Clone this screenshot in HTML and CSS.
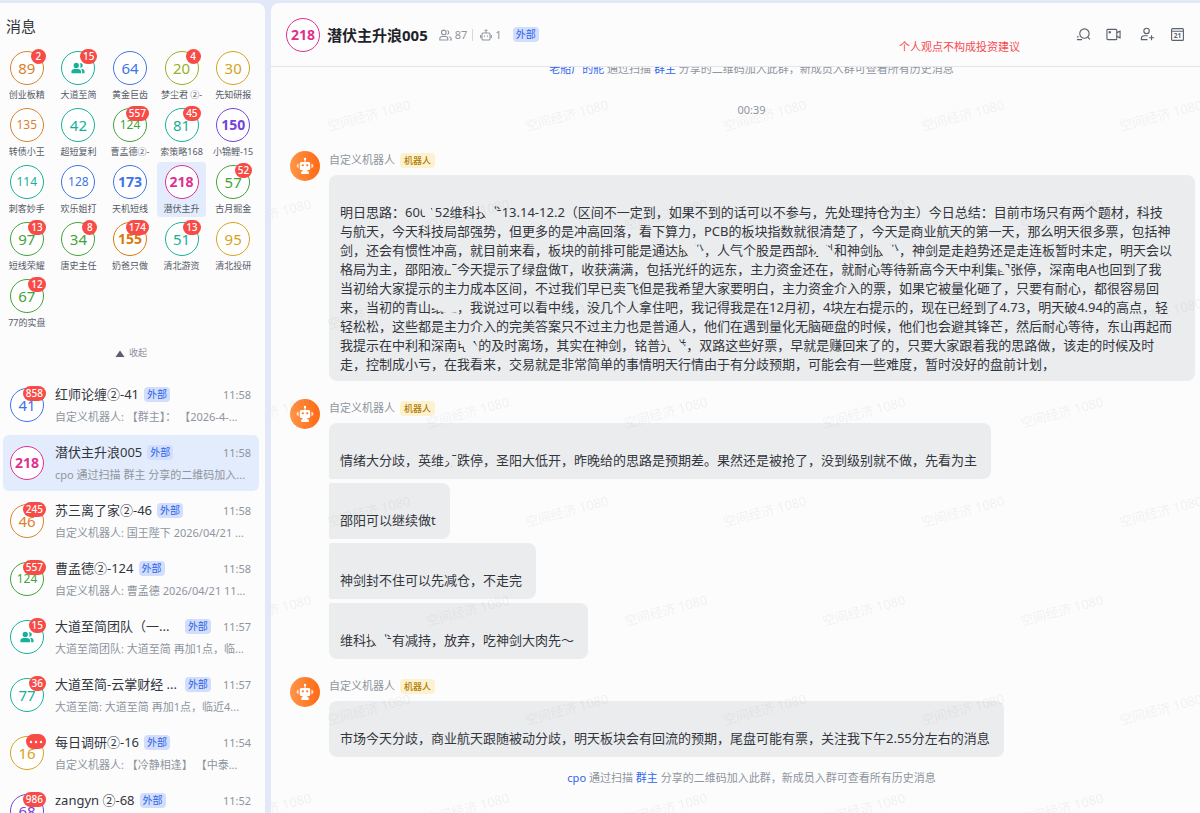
FILE: index.html
```html
<!DOCTYPE html>
<html lang="zh-CN">
<head>
<meta charset="utf-8">
<title>消息</title>
<link rel="stylesheet" href="styles.css">
</head>
<body>
<svg width="0" height="0" class="defs" aria-hidden="true">
  <symbol id="people" viewBox="0 0 16 16">
    <g fill="currentColor"><circle cx="6" cy="5" r="3"/><path d="M0.500 14v-2c0-2 1.500-3 3.500-3h4c2 0 3.500 1 3.500 3v2z"/><path d="M10 2.600a2.600 2.600 0 1 1 0.400 5c.8-1.600.8-3.400-.4-5z"/><path d="M11.500 9h1c2 0 3 1.200 3 3v2h-2.800v-2c0-1.200-.4-2.200-1.200-3z"/></g>
  </symbol>
  <symbol id="bot" viewBox="0 0 30 30">
    <g fill="#fff"><circle cx="15" cy="8" r="1.200"/><rect x="14.500" y="8" width="1" height="4"/><rect x="9.800" y="11" width="10.400" height="8" rx="1.500"/><path d="M12.500 19h5v1.500h1.300V23h-7.600v-2.500h1.300z"/><path d="M8.600 12.800v4.400c-1.200-.3-2-1.200-2-2.200s.8-1.900 2-2.200zM21.400 12.800v4.400c1.200-.3 2-1.200 2-2.200s-.8-1.900-2-2.200z" opacity=".8"/></g>
    <g fill="#ff7a22"><circle cx="12.800" cy="14.300" r="1.100"/><circle cx="17.200" cy="14.300" r="1.100"/></g>
  </symbol>
</svg>

<aside class="sidebar">
  <h1 class="sidebar-title">消息</h1>
  <div class="pins">
    <button class="pin"><span class="avatar orange">89<span class="badge">2</span></span><span class="pin-label">创业板精</span></button>
    <button class="pin"><span class="avatar teal"><svg class="people"><use href="#people"/></svg><span class="badge">15</span></span><span class="pin-label">大道至简</span></button>
    <button class="pin"><span class="avatar blue">64</span><span class="pin-label">黄金巨齿</span></button>
    <button class="pin"><span class="avatar lime">20<span class="badge">4</span></span><span class="pin-label">梦尘君 ②-</span></button>
    <button class="pin"><span class="avatar gold">30</span><span class="pin-label">先知研报</span></button>

    <button class="pin"><span class="avatar orange three">135</span><span class="pin-label">转债小王</span></button>
    <button class="pin"><span class="avatar teal">42</span><span class="pin-label">超短复利</span></button>
    <button class="pin"><span class="avatar green three">124<span class="badge">557</span></span><span class="pin-label">曹孟德②-</span></button>
    <button class="pin"><span class="avatar teal">81<span class="badge">45</span></span><span class="pin-label">索策略168</span></button>
    <button class="pin"><span class="avatar purple strong">150</span><span class="pin-label">小锦鲤-15</span></button>

    <button class="pin"><span class="avatar teal three">114</span><span class="pin-label">刺客妙手</span></button>
    <button class="pin"><span class="avatar blue three">128</span><span class="pin-label">欢乐姐打</span></button>
    <button class="pin"><span class="avatar blue strong">173</span><span class="pin-label">天机短线</span></button>
    <button class="pin selected"><span class="avatar pink strong">218</span><span class="pin-label">潜伏主升</span></button>
    <button class="pin"><span class="avatar green">57<span class="badge">52</span></span><span class="pin-label">古月掘金</span></button>

    <button class="pin"><span class="avatar green">97<span class="badge">13</span></span><span class="pin-label">短线荣耀</span></button>
    <button class="pin"><span class="avatar green">34<span class="badge">8</span></span><span class="pin-label">唐史主任</span></button>
    <button class="pin"><span class="avatar orange strong">155<span class="badge">174</span></span><span class="pin-label">奶爸只做</span></button>
    <button class="pin"><span class="avatar teal">51<span class="badge">13</span></span><span class="pin-label">清北游资</span></button>
    <button class="pin"><span class="avatar gold">95</span><span class="pin-label">清北投研</span></button>

    <button class="pin"><span class="avatar green">67<span class="badge">12</span></span><span class="pin-label">77的实盘</span></button>
  </div>
  <button class="collapse"><svg width="10" height="7" viewBox="0 0 10 7"><path d="M5 0.500 9.500 7h-9z" fill="#5a606b"/></svg>收起</button>

  <div class="chats">
    <button class="chat"><span class="avatar blue">41<span class="badge">858</span></span>
      <span class="chat-body"><span class="chat-top"><span class="chat-name">红师论缠②-41</span><span class="tag">外部</span><time>11:58</time></span><span class="preview">自定义机器人: 【群主】： 【2026-4-...</span></span></button>
    <button class="chat selected"><span class="avatar pink strong">218</span>
      <span class="chat-body"><span class="chat-top"><span class="chat-name">潜伏主升浪005</span><span class="tag">外部</span><time>11:58</time></span><span class="preview">cpo 通过扫描 群主 分享的二维码加入...</span></span></button>
    <button class="chat"><span class="avatar orange">46<span class="badge">245</span></span>
      <span class="chat-body"><span class="chat-top"><span class="chat-name">苏三离了家②-46</span><span class="tag">外部</span><time>11:58</time></span><span class="preview">自定义机器人: 国王陛下 2026/04/21 ...</span></span></button>
    <button class="chat"><span class="avatar green three">124<span class="badge">557</span></span>
      <span class="chat-body"><span class="chat-top"><span class="chat-name">曹孟德②-124</span><span class="tag">外部</span><time>11:58</time></span><span class="preview">自定义机器人: 曹孟德 2026/04/21 11...</span></span></button>
    <button class="chat"><span class="avatar teal"><svg class="people"><use href="#people"/></svg><span class="badge">15</span></span>
      <span class="chat-body"><span class="chat-top"><span class="chat-name fill">大道至简团队（一...</span><span class="tag">外部</span><time>11:57</time></span><span class="preview">大道至简团队: 大道至简 再加1点，临...</span></span></button>
    <button class="chat"><span class="avatar teal">77<span class="badge">36</span></span>
      <span class="chat-body"><span class="chat-top"><span class="chat-name fill">大道至简-云掌财经 ...</span><span class="tag">外部</span><time>11:57</time></span><span class="preview">大道至简: 大道至简 再加1点，临近4...</span></span></button>
    <button class="chat"><span class="avatar gold">16<span class="badge"><svg width="14" height="4" viewBox="0 0 14 4" fill="#fff"><circle cx="2" cy="2" r="1.200"/><circle cx="7" cy="2" r="1.200"/><circle cx="12" cy="2" r="1.200"/></svg></span></span>
      <span class="chat-body"><span class="chat-top"><span class="chat-name">每日调研②-16</span><span class="tag">外部</span><time>11:54</time></span><span class="preview">自定义机器人: 【冷静相逢】 【中泰...</span></span></button>
    <button class="chat"><span class="avatar purple">68<span class="badge">986</span></span>
      <span class="chat-body"><span class="chat-top"><span class="chat-name">zangyn ②-68</span><span class="tag">外部</span><time>11:52</time></span></span></button>
  </div>
</aside>

<main class="panel">
  <header class="head">
    <span class="avatar pink strong">218</span>
    <h2 class="head-title">潜伏主升浪005</h2>
    <span class="stat"><svg width="13" height="12" viewBox="0 0 13 12" fill="none" stroke="currentColor" stroke-width="1.100"><circle cx="4.800" cy="3.400" r="2.300"/><path d="M.8 11V9.800c0-1.500 1-2.300 2.300-2.300h3.400c1.300 0 2.300.8 2.300 2.300V11zM8.300 1.500a2.100 2.100 0 0 1 0 4M10 7.800c1.400.2 2.200 1 2.200 2.200v1h-1.400"/></svg>87</span>
    <span class="rule"></span>
    <span class="stat"><svg width="12" height="12" viewBox="0 0 12 12" fill="none" stroke="currentColor" stroke-width="1.100"><rect x="2" y="4" width="8" height="7" rx="1"/><path d="M6 4V1M4.500 1.200h3M.6 6v3M11.400 6v3M4.500 6.500v1.200M7.500 6.500v1.200"/></svg>1</span>
    <span class="tag">外部</span>
    <p class="notice-red">个人观点不构成投资建议</p>
    <nav class="tools">
      <button aria-label="搜索"><svg viewBox="0 0 16 16"><circle cx="9" cy="7" r="5"/><path d="m12.500 10.700 2.500 2.600M1 10.500h1.800M1 13.500h5.500"/></svg></button>
      <button aria-label="视频会议"><svg viewBox="0 0 16 16"><rect x="1" y="2.500" width="10.500" height="11" rx="1"/><path d="m11.500 6 3.500-1.500v7L11.500 10"/><circle cx="4" cy="5.600" r=".7" fill="currentColor"/></svg></button>
      <button aria-label="添加成员" class="add"><svg viewBox="0 0 16 16"><circle cx="7" cy="4.200" r="2.900"/><path d="M8 13.500H1.500V12c0-1.700 1.200-2.700 2.800-2.700h4M12.300 8.800v5.400M9.600 11.500H15"/></svg></button>
      <button aria-label="日历"><svg viewBox="0 0 16 16"><rect x="1.700" y="1.700" width="12.600" height="12.600" rx="1"/><path d="M1.700 4.500h12.600"/><text x="8" y="12" text-anchor="middle">21</text></svg></button>
    </nav>
  </header>

  <section class="stream">
    <p class="system first"><a href="#">老船厂的舵</a> 通过扫描 <a href="#">群主</a> 分享的二维码加入此群，新成员入群可查看所有历史消息</p>
    <p class="system stamp">00:39</p>

    <article class="group">
      <svg class="bot"><use href="#bot"/></svg>
      <div class="group-body">
        <p class="sender">自定义机器人<span class="tag bot-tag">机器人</span></p>
        <div class="bubble long">明日思路：60<span class="worn">01</span>52维科<span class="worn">技术</span>13.14-12.2（区间不一定到，如果不到的话可以不参与，先处理持仓为主）今日总结：目前市场只有两个题材，科技<br>与航天，今天科技局部强势，但更多的是冲高回落，看下算力，PCB的板块指数就很清楚了，今天是商业航天的第一天，那么明天很多票，包括神<br>剑，还会有惯性冲高，就目前来看，板块的前排可能是通达<span class="worn">股份</span>，人气个股是西部<span class="worn">材料</span>和神剑<span class="worn">股份</span>，神剑是走趋势还是走连板暂时未定，明天会以<br>格局为主，邵阳液<span class="worn one">压</span>今天提示了绿盘做T，收获满满，包括光纤的远东，主力资金还在，就耐心等待新高今天中利集<span class="worn one">团</span>张停，深南电A也回到了我<br>当初给大家提示的主力成本区间，不过我们早已卖飞但是我希望大家要明白，主力资金介入的票，如果它被量化砸了，只要有耐心，都很容易回<br>来，当初的青山<span class="worn low">纸业</span>，我说过可以看中线，没几个人拿住吧，我记得我是在12月初，4块左右提示的，现在已经到了4.73，明天破4.94的高点，轻<br>轻松松，这些都是主力介入的完美答案只不过主力也是普通人，他们在遇到量化无脑砸盘的时候，他们也会避其锋芒，然后耐心等待，东山再起而<br>我提示在中利和深南<span class="worn">电A</span>的及时离场，其实在神剑，铭普<span class="worn">光磁</span>，双路这些好票，早就是赚回来了的，只要大家跟着我的思路做，该走的时候及时<br>走，控制成小亏，在我看来，交易就是非常简单的事情明天行情由于有分歧预期，可能会有一些难度，暂时没好的盘前计划，</div>
      </div>
    </article>

    <article class="group">
      <svg class="bot"><use href="#bot"/></svg>
      <div class="group-body">
        <p class="sender">自定义机器人<span class="tag bot-tag">机器人</span></p>
        <div class="bubble">情绪大分歧，英维<span class="worn one">克</span>跌停，圣阳大低开，昨晚给的思路是预期差。果然还是被抢了，没到级别就不做，先看为主</div>
        <div class="bubble">邵阳可以继续做t</div>
        <div class="bubble">神剑封不住可以先减仓，不走完</div>
        <div class="bubble">维科<span class="worn">技术</span>有减持，放弃，吃神剑大肉先～</div>
      </div>
    </article>

    <article class="group">
      <svg class="bot"><use href="#bot"/></svg>
      <div class="group-body">
        <p class="sender">自定义机器人<span class="tag bot-tag">机器人</span></p>
        <div class="bubble">市场今天分歧，商业航天跟随被动分歧，明天板块会有回流的预期，尾盘可能有票，关注我下午2.55分左右的消息</div>
      </div>
    </article>

    <p class="system last"><a href="#">cpo</a> 通过扫描 <a href="#">群主</a> 分享的二维码加入此群，新成员入群可查看所有历史消息</p>

    <svg class="watermark" width="100%" height="100%" aria-hidden="true">
      <defs><pattern id="wm" x="45" y="29" width="198" height="198" patternUnits="userSpaceOnUse">
        <text transform="translate(13 35) rotate(-15)">空间经济 1080</text>
        <text transform="translate(112 134) rotate(-15)">空间经济 1080</text>
      </pattern></defs>
      <rect width="100%" height="100%" fill="url(#wm)"/>
    </svg>
  </section>
</main>
</body>
</html>
```
FILE: styles.css
```css
* { box-sizing: border-box; }
body {
  margin: 0;
  height: 100vh;
  padding-top: 3px;
  display: flex;
  gap: 6px;
  overflow: hidden;
  background: #e2e8f7;
  color: #32363d;
  font: 13px/19px "Noto Sans", "Noto Sans CJK SC", sans-serif;
}
h1, h2, p { margin: 0; font-weight: 400; }
button {
  border: 0;
  padding: 0;
  background: none;
  color: inherit;
  font: inherit;
  text-align: inherit;
}
a { color: #2f66ee; text-decoration: none; }
.defs { position: absolute; }

/* Sidebar */
.sidebar {
  flex: 0 0 265px;
  background: #fcfcfd;
  border-radius: 0 8px 0 0;
  overflow: hidden;
}
.sidebar-title { padding: 12px 6px 11px; font-size: 15px; line-height: 22px; }
.pins {
  display: grid;
  grid-template-columns: repeat(5, 1fr);
  gap: 2px;
  padding: 0 7px 0 2px;
}
.pin {
  display: flex;
  flex-direction: column;
  align-items: center;
  gap: 3px;
  padding: 3px 0 1px;
  border-radius: 4px;
}
.pin-label { font-size: 9px; line-height: 14px; color: #555b66; white-space: nowrap; }
.selected { background: #e3ecfc; }

.avatar {
  position: relative;
  flex: none;
  display: flex;
  align-items: center;
  justify-content: center;
  width: 34px;
  height: 34px;
  border: 1px solid currentColor;
  border-radius: 50%;
  background: #fff;
  font-size: 15px;
  line-height: 20px;
}
.three { font-size: 12px; }
.strong { font-size: 14px; font-weight: 700; }
.people { width: 14px; height: 14px; }
.orange { color: #d9822b; }
.teal { color: #17b099; }
.blue { color: #3f74e8; }
.lime { color: #98b023; }
.gold { color: #d5a320; }
.green { color: #41a338; }
.purple { color: #7543dc; }
.pink { color: #e0308f; }
.orange.strong { color: #d87a0c; }

.badge {
  position: absolute;
  top: -3px;
  right: -3px;
  display: flex;
  align-items: center;
  justify-content: center;
  min-width: 15px;
  height: 15px;
  padding: 0 3px;
  border-radius: 8px;
  background: #f84b46;
  color: #fff;
  font-size: 10px;
  font-weight: 500;
  line-height: 15px;
}

.collapse {
  display: flex;
  align-items: center;
  justify-content: center;
  gap: 4px;
  width: 100%;
  padding: 14px 3px 16px 0;
  font-size: 9px;
  line-height: 16px;
  color: #8a909a;
}

.chats { display: flex; flex-direction: column; gap: 2px; padding: 0 6px 0 3px; }
.chat {
  display: flex;
  align-items: center;
  gap: 11px;
  height: 56px;
  padding: 0 8px 0 7px;
  border-radius: 6px;
}
.chat-body { flex: 1; min-width: 0; height: 42px; display: flex; flex-direction: column; gap: 4px; }
.chat-top { display: flex; align-items: center; gap: 5px; height: 20px; }
.chat-name { white-space: nowrap; }
.fill { flex: 1; overflow: hidden; }
.chat time { margin-left: auto; font-size: 11px; color: #8f959e; }
.fill ~ time { margin-left: 7px; }
.preview { font-size: 11px; line-height: 18px; color: #8f959e; white-space: nowrap; overflow: hidden; }

.tag {
  flex: none;
  padding: 0 3px;
  border-radius: 4px;
  background: #d2defc;
  color: #2c63ea;
  font-size: 10px;
  line-height: 15px;
}

/* Conversation */
.panel {
  flex: 1;
  min-width: 0;
  display: flex;
  flex-direction: column;
  background: #fcfcfd;
  border-radius: 8px 0 0 0;
  overflow: hidden;
}
.head {
  flex: none;
  display: flex;
  align-items: center;
  height: 64px;
  padding: 0 15px;
  border-bottom: 1px solid #e4e5e8;
}
.head-title { margin: 0 11px 0 7px; font-size: 15px; font-weight: 700; line-height: 22px; color: #1f2329; white-space: nowrap; }
.stat { display: flex; align-items: center; gap: 3px; font-size: 11px; color: #8f959e; }
.rule { width: 1px; height: 12px; margin: 0 7px 0 5px; background: #d5d7db; }
.head .tag { margin-left: 11px; }
.notice-red {
  margin-left: auto;
  padding-top: 24px;
  font-size: 11px;
  line-height: 16px;
  color: #f64b4f;
  white-space: nowrap;
}
.tools { display: flex; gap: 15px; margin-left: 56px; }
.tools button { width: 15px; height: 15px; display: flex; color: #5c626c; }
.tools .add { margin-left: 4px; }
.tools svg { width: 15px; height: 15px; fill: none; stroke: currentColor; stroke-width: 1.2; }
.tools text { font-size: 7px; font-weight: 700; fill: currentColor; stroke: none; }

.stream { position: relative; flex: 1; min-height: 0; overflow: hidden; padding: 0 5px 0 19px; }
.system {
  padding-left: 18px;
  text-align: center;
  font-size: 11px;
  line-height: 18px;
  color: #8f959e;
}
.first { margin-top: -7px; }
.stamp { margin: 23px 0 32px; }
.last { margin-top: -6px; }

.group { display: flex; align-items: flex-start; gap: 9px; margin-bottom: 18px; }
.bot {
  flex: none;
  width: 30px;
  height: 30px;
  border-radius: 50%;
  background: linear-gradient(90deg, #ff9548, #ff6a14);
}
.group-body { flex: 1; min-width: 0; display: flex; flex-direction: column; align-items: flex-start; gap: 4px; }
.sender {
  display: flex;
  align-items: center;
  gap: 5px;
  margin-bottom: 2px;
  font-size: 11px;
  line-height: 18px;
  color: #8f959e;
}
.bot-tag { padding: 0 4px; background: #fdf2d0; color: #b27c05; font-size: 9px; font-weight: 500; }
.bubble {
  padding: 28px 14px 9px 11px;
  border-radius: 2px 8px 8px 2px;
  background: #ebecee;
}
.bubble:nth-child(2) { border-top-left-radius: 8px; }
.bubble:last-child { border-bottom-left-radius: 8px; }
.long { align-self: stretch; padding-bottom: 7px; white-space: nowrap; }

/* Words rubbed out by a slanted stroke in the bubble's own colour */
.worn { position: relative; display: inline-block; }
.worn::after {
  content: "";
  position: absolute;
  inset: 0;
  background: #ebecee;
  clip-path: polygon(12% 0, 52% 0, 100% 62%, 100% 100%, 46% 100%, 30% 55%, 12% 40%);
}
.one::after { clip-path: polygon(0 0, 30% 0, 100% 50%, 100% 100%, 75% 100%, 40% 60%, 0 45%); }
.low::after { clip-path: polygon(0 0, 100% 0, 100% 76%, 60% 80%, 0 50%); }

.watermark { position: absolute; inset: 0; pointer-events: none; }
.watermark text { font-size: 13px; fill: #1f2329; fill-opacity: 0.055; }
```
